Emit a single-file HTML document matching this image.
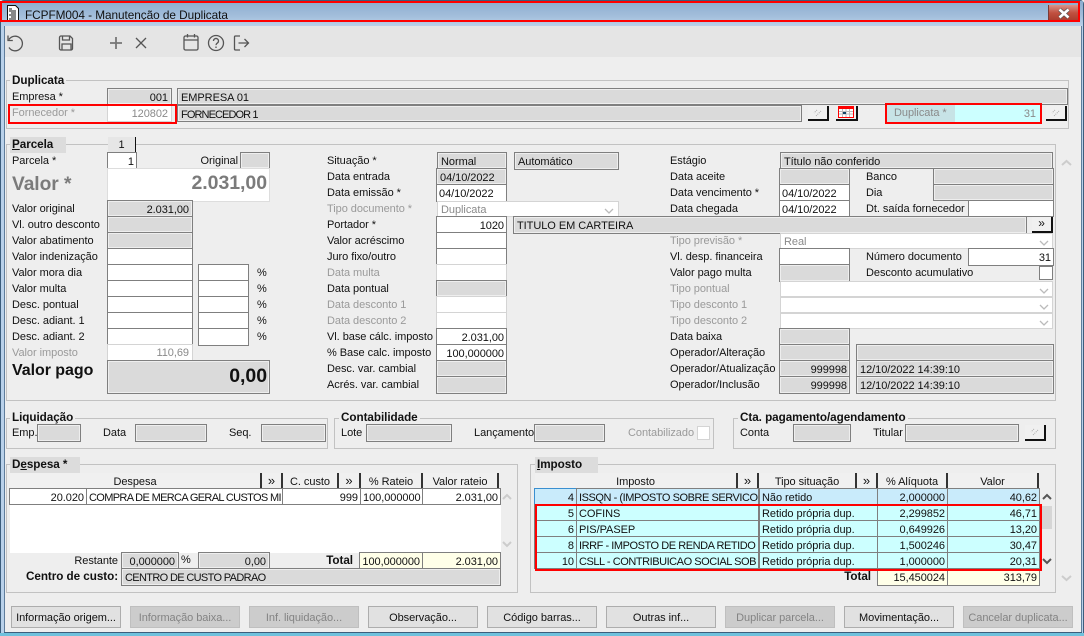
<!DOCTYPE html>
<html><head><meta charset="utf-8"><style>
html,body{margin:0;padding:0;width:1084px;height:636px;overflow:hidden;background:#eee}
body{font:11px/17px "Liberation Sans",sans-serif;letter-spacing:-.05px;color:#111;position:relative}
div,span.a{position:absolute;box-sizing:border-box;white-space:nowrap}
.l{height:16px;line-height:18px}
.d{color:#9a9a9a}
.b{font-weight:bold;font-size:11.7px;line-height:17px}
.r{text-align:right}
.f{border:1px solid #7f7f7f;background:#dadada;box-shadow:inset 0 0 0 1px #eee;padding:1px 3px 0;line-height:17px;overflow:hidden}
.w{border:1px solid #7f7f7f;background:#fff;padding:1px 2px 0;line-height:17px;overflow:hidden}
.p{border:1px solid #d4d4d4;background:#fff;padding:0 3px;line-height:16px;color:#8a8a8a;overflow:hidden}
.g{border:1px solid #c2c2c2}
.gt{background:#eee;font-weight:bold;font-size:11.7px;height:14px;line-height:15px;padding:0 2px}
.tab{background:#dcdcdc;font-weight:bold;font-size:11.7px;height:16px;line-height:16px;padding-left:2px}
.btn{width:110px;height:22px;top:606px;background:#e1e1e1;border:1px solid #adadad;text-align:center;line-height:22px}
.dis{background:#ccc;border-color:#bfbfbf;color:#838383}
.sb{background:#f0f0f0;border-right:2px solid #111;border-bottom:2px solid #111;text-align:center;line-height:13px;color:#999;font-size:12px}
.sb svg{display:block;margin:2px auto 0}
.hd{top:473px;height:16px;background:#f0f0f0;border-right:2px solid #333;text-align:center;line-height:18px;overflow:hidden}
.c{height:17px;border:1px solid #7f7f7f;padding:1px 2px 0;line-height:17px;overflow:hidden}
.cy{background:#ccffff}.cb{background:#c9ebfb}.cr{background:#ffffe8}
.red{border:2px solid #f00;background:none;z-index:5}
.t1{letter-spacing:-.45px}.t2{letter-spacing:-.65px}.t3{letter-spacing:-.9px}
</style></head><body>
<!-- window frame -->
<div style="left:0;top:0;width:1084px;height:636px;background:#b9d1ea;border:1px solid #3c5d7c;border-radius:4px 4px 0 0"></div>
<div style="left:1px;top:1px;width:1082px;height:25px;background:linear-gradient(#8baccf,#a3bedb 60%,#b9d1ea)"></div>
<div style="left:5px;top:57px;width:1076px;height:576px;background:#eee"></div>
<div style="left:5px;top:26px;width:1076px;height:31px;background:#e5e5e5"></div>
<div style="left:4px;top:26px;width:1px;height:607px;background:#5f7d9c"></div>
<div style="left:1081px;top:26px;width:1px;height:607px;background:#5f7d9c"></div>
<div style="left:4px;top:632px;width:1078px;height:1px;background:#3c5d7c"></div>
<div style="left:0;top:633px;width:1084px;height:3px;background:#6fc1dc"></div>
<!-- title -->
<svg style="position:absolute;left:7px;top:5px" width="12" height="16" viewBox="0 0 12 16"><path d="M.5.5h8l3 3v12H.5z" fill="#fff" stroke="#111"/><path d="M2 4h3M2 6h7M4 8h5M2 10h7M4 12h5M2 14h7" stroke="#111"/></svg>
<div style="left:25px;top:7px;font-size:11.8px;height:16px;line-height:16px;color:#111">FCPFM004 - Manutenção de Duplicata</div>
<div style="left:1048px;top:5px;width:31px;height:17px;background:linear-gradient(#d9928a,#c0503f 50%,#a83a2c);border:1px solid #7a3a36;border-top:none"></div>
<svg style="position:absolute;left:1057px;top:8px" width="14" height="11" viewBox="0 0 14 11"><path d="M2.500 1.500l9 8M11.500 1.500l-9 8" stroke="#555" stroke-width="4"/><path d="M2.500 1.500l9 8M11.500 1.500l-9 8" stroke="#fff" stroke-width="2.600"/></svg>
<div class="red" style="left:0;top:1px;width:1080px;height:21px"></div>
<!-- toolbar -->
<svg style="position:absolute;left:0;top:26px" width="260" height="31" viewBox="0 0 260 31" fill="none" stroke="#555" stroke-width="1.300">
<path d="M9 13.500A7.300 7.300 0 1 1 9 21.500M8 9.500v5h4.800"/>
<path d="M59.500 11.500a1.500 1.500 0 0 1 1.500-1.500h9l2.500 2.500v10a1.500 1.500 0 0 1-1.500 1.500H61a1.500 1.500 0 0 1-1.500-1.500zM62.500 10v4h7v-4M62 24v-6h9v6"/>
<path d="M116 11v12M110 17h12" stroke="#777" stroke-width="1.800"/>
<path d="M136 12l10 10M146 12l-10 10"/>
<path d="M185.500 10h11a1.500 1.500 0 0 1 1.500 1.500v11a1.500 1.500 0 0 1-1.500 1.500h-11a1.500 1.500 0 0 1-1.500-1.500v-11a1.500 1.500 0 0 1 1.500-1.500zM184 14h14M187.500 8v3.500M194.500 8v3.500"/>
<circle cx="216" cy="17" r="7.500"/><path d="M213.500 15a2.500 2.500 0 1 1 3.800 2.100c-.9.600-1.300 1-1.300 2M216 20.500v1.500"/>
<path d="M240 10h-4.500a1 1 0 0 0-1 1v12a1 1 0 0 0 1 1h4.500M238.500 17h9.500M244.500 13l4 4-4 4"/>
</svg>
<!-- Duplicata group -->
<div class="g" style="left:6px;top:80px;width:1063px;height:49px"></div>
<div class="gt" style="left:10px;top:73px">Duplicata</div>
<div class="l" style="left:12px;top:88px">Empresa *</div>
<div class="f r" style="left:107px;top:88px;width:65px;height:17px">001</div>
<div class="f" style="left:177px;top:88px;width:891px;height:17px">EMPRESA 01</div>
<div class="l d" style="left:12px;top:104px">Fornecedor *</div>
<div class="p r" style="left:107px;top:105px;width:65px;height:17px">120802</div>
<div class="f" style="left:177px;top:105px;width:625px;height:17px"><span class="t3">FORNECEDOR 1</span></div>
<div class="sb" style="left:808px;top:106px;width:21px;height:15px"><svg width="11" height="9" fill="none" stroke="#aaa" stroke-dasharray="1 1"><path d="M5 2L2 5M9 3L4 8"/></svg></div>
<div class="sb" style="left:836px;top:106px;width:22px;height:15px"></div>
<svg style="position:absolute;left:838px;top:106px" width="16" height="12" viewBox="0 0 16 12"><rect width="16" height="12" fill="#f00"/><rect x="1" y="3" width="14" height="8" fill="#fff"/><path d="M4.500 3v8M8 3v8M11.500 3v8M1 5.500h14M1 8h14" stroke="#bbb"/><rect x="5" y="6" width="3" height="2" fill="#146"/></svg>
<div class="red" style="left:8px;top:104px;width:169px;height:20px"></div>
<div style="left:887px;top:105px;width:68px;height:17px;background:#c7e3e6;color:#8a8a8a;padding-left:7px;line-height:16px">Duplicata *</div>
<div class="r" style="left:955px;top:105px;width:85px;height:17px;background:#ccffff;color:#8a8a8a;padding-right:4px;line-height:18px">31</div>
<div class="red" style="left:885px;top:103px;width:157px;height:21px"></div>
<div class="sb" style="left:1046px;top:106px;width:21px;height:15px"><svg width="11" height="9" fill="none" stroke="#aaa" stroke-dasharray="1 1"><path d="M5 2L2 5M9 3L4 8"/></svg></div>
<!-- Parcela group -->
<div class="g" style="left:6px;top:144px;width:1050px;height:257px"></div>
<div class="tab" style="left:10px;top:137px;width:56px"><u>P</u>arcela</div>
<div style="left:108px;top:137px;width:28px;height:15px;background:#e6e6e6;border-right:1px solid #111;text-align:center;line-height:16px">1</div>
<!-- col 1 -->
<div class="l" style="left:12px;top:152px">Parcela *</div>
<div class="w r" style="left:107px;top:152px;width:30px;height:17px">1</div>
<div class="l r" style="left:160px;top:152px;width:78px">Original</div>
<div class="f" style="left:240px;top:152px;width:30px;height:17px"></div>
<div style="left:12px;top:173px;font-size:19.200px;font-weight:bold;line-height:24px;color:#7b7b7b">Valor *</div>
<div class="r" style="left:107px;top:168px;width:163px;height:34px;background:#fff;border:1px solid #ddd;font-size:19.500px;font-weight:bold;line-height:29px;color:#7b7b7b;padding-right:2px">2.031,00</div>
<div class="l" style="left:12px;top:200px">Valor original</div>
<div class="f r" style="left:107px;top:200px;width:86px;height:17px">2.031,00</div>
<div class="l" style="left:12px;top:216px">Vl. outro desconto</div>
<div class="f" style="left:107px;top:216px;width:86px;height:17px"></div>
<div class="l" style="left:12px;top:232px">Valor abatimento</div>
<div class="f" style="left:107px;top:232px;width:86px;height:17px"></div>
<div class="l" style="left:12px;top:248px">Valor indenização</div>
<div class="w" style="left:107px;top:248px;width:86px;height:17px"></div>
<div class="l" style="left:12px;top:264px">Valor mora dia</div>
<div class="w" style="left:107px;top:264px;width:86px;height:17px"></div>
<div class="w" style="left:198px;top:264px;width:51px;height:17px"></div>
<div class="l" style="left:257px;top:264px">%</div>
<div class="l" style="left:12px;top:280px">Valor multa</div>
<div class="w" style="left:107px;top:280px;width:86px;height:17px"></div>
<div class="w" style="left:198px;top:280px;width:51px;height:17px"></div>
<div class="l" style="left:257px;top:280px">%</div>
<div class="l" style="left:12px;top:296px">Desc. pontual</div>
<div class="w" style="left:107px;top:296px;width:86px;height:17px"></div>
<div class="w" style="left:198px;top:296px;width:51px;height:17px"></div>
<div class="l" style="left:257px;top:296px">%</div>
<div class="l" style="left:12px;top:312px">Desc. adiant. 1</div>
<div class="w" style="left:107px;top:312px;width:86px;height:17px"></div>
<div class="w" style="left:198px;top:312px;width:51px;height:17px"></div>
<div class="l" style="left:257px;top:312px">%</div>
<div class="l" style="left:12px;top:328px">Desc. adiant. 2</div>
<div class="w" style="left:107px;top:328px;width:86px;height:17px"></div>
<div class="w" style="left:198px;top:328px;width:51px;height:18px"></div>
<div class="l" style="left:257px;top:328px">%</div>
<div class="l d" style="left:12px;top:344px">Valor imposto</div>
<div class="p r" style="left:107px;top:344px;width:86px;height:17px;line-height:17px">110,69</div>
<div style="left:12px;top:361px;font-size:16px;font-weight:bold;line-height:20px">Valor pago</div>
<div class="f r" style="left:107px;top:360px;width:163px;height:34px;font-size:19.500px;font-weight:bold;line-height:29px;padding-right:2px">0,00</div>
<!-- col 2 -->
<div class="l" style="left:327px;top:152px">Situação *</div>
<div class="f" style="left:437px;top:152px;width:70px;height:17px">Normal</div>
<div class="f" style="left:514px;top:152px;width:105px;height:18px">Automático</div>
<div class="l" style="left:327px;top:168px">Data entrada</div>
<div class="f" style="left:436px;top:168px;width:71px;height:17px">04/10/2022</div>
<div class="l" style="left:327px;top:184px">Data emissão *</div>
<div class="w" style="left:436px;top:184px;width:71px;height:18px">04/10/2022</div>
<div class="l d" style="left:327px;top:200px">Tipo documento *</div>
<div class="p" style="left:437px;top:201px;width:182px;height:16px">Duplicata</div>
<div class="l" style="left:327px;top:216px">Portador *</div>
<div class="w r" style="left:436px;top:216px;width:71px;height:17px">1020</div>
<div class="f" style="left:513px;top:216px;width:514px;height:18px">TITULO EM CARTEIRA</div>
<div class="sb" style="left:1032px;top:217px;width:21px;height:16px;color:#111">»</div>
<div class="l" style="left:327px;top:232px">Valor acréscimo</div>
<div class="w" style="left:436px;top:232px;width:71px;height:17px"></div>
<div class="l" style="left:327px;top:248px">Juro fixo/outro</div>
<div class="w" style="left:436px;top:248px;width:71px;height:17px"></div>
<div class="l d" style="left:327px;top:264px">Data multa</div>
<div class="p" style="left:436px;top:264px;width:71px;height:17px"></div>
<div class="l" style="left:327px;top:280px">Data pontual</div>
<div class="f" style="left:436px;top:280px;width:71px;height:17px"></div>
<div class="l d" style="left:327px;top:296px">Data desconto 1</div>
<div class="p" style="left:436px;top:296px;width:71px;height:17px"></div>
<div class="l d" style="left:327px;top:312px">Data desconto 2</div>
<div class="p" style="left:436px;top:312px;width:71px;height:17px"></div>
<div class="l" style="left:327px;top:328px">Vl. base cálc. imposto</div>
<div class="w r" style="left:436px;top:328px;width:71px;height:17px">2.031,00</div>
<div class="l" style="left:327px;top:344px">% Base calc. imposto</div>
<div class="w r" style="left:436px;top:344px;width:71px;height:17px">100,000000</div>
<div class="l" style="left:327px;top:360px">Desc. var. cambial</div>
<div class="f" style="left:436px;top:360px;width:71px;height:17px"></div>
<div class="l" style="left:327px;top:376px">Acrés. var. cambial</div>
<div class="f" style="left:436px;top:376px;width:71px;height:18px"></div>
<!-- col 3 -->
<div class="l" style="left:670px;top:152px">Estágio</div>
<div class="f" style="left:780px;top:152px;width:273px;height:17px">Título não conferido</div>
<div class="l" style="left:670px;top:168px">Data aceite</div>
<div class="f" style="left:779px;top:168px;width:71px;height:17px"></div>
<div class="l" style="left:866px;top:168px">Banco</div>
<div class="f" style="left:933px;top:168px;width:121px;height:17px"></div>
<div class="l" style="left:670px;top:184px">Data vencimento *</div>
<div class="w" style="left:779px;top:184px;width:71px;height:17px">04/10/2022</div>
<div class="l" style="left:866px;top:184px">Dia</div>
<div class="f" style="left:933px;top:184px;width:121px;height:17px"></div>
<div class="l" style="left:670px;top:200px">Data chegada</div>
<div class="w" style="left:779px;top:200px;width:71px;height:17px">04/10/2022</div>
<div class="l" style="left:866px;top:200px">Dt. saída fornecedor</div>
<div class="w" style="left:968px;top:200px;width:86px;height:17px"></div>
<div class="l d" style="left:670px;top:232px">Tipo previsão *</div>
<div class="p" style="left:780px;top:233px;width:273px;height:16px">Real</div>
<div class="l" style="left:670px;top:248px">Vl. desp. financeira</div>
<div class="w" style="left:779px;top:248px;width:71px;height:17px"></div>
<div class="l" style="left:866px;top:248px">Número documento</div>
<div class="w r" style="left:968px;top:248px;width:86px;height:18px">31</div>
<div class="l" style="left:670px;top:264px">Valor pago multa</div>
<div class="f" style="left:779px;top:264px;width:71px;height:18px"></div>
<div class="l" style="left:866px;top:264px">Desconto acumulativo</div>
<div class="w" style="left:1039px;top:266px;width:14px;height:14px"></div>
<div class="l d" style="left:670px;top:280px">Tipo pontual</div>
<div class="p" style="left:780px;top:281px;width:273px;height:16px"></div>
<div class="l d" style="left:670px;top:296px">Tipo desconto 1</div>
<div class="p" style="left:780px;top:297px;width:273px;height:16px"></div>
<div class="l d" style="left:670px;top:312px">Tipo desconto 2</div>
<div class="p" style="left:780px;top:313px;width:273px;height:16px"></div>
<div class="l" style="left:670px;top:328px">Data baixa</div>
<div class="f" style="left:779px;top:328px;width:71px;height:17px"></div>
<div class="l" style="left:670px;top:344px">Operador/Alteração</div>
<div class="f" style="left:779px;top:344px;width:71px;height:17px"></div>
<div class="f" style="left:856px;top:344px;width:198px;height:17px"></div>
<div class="l" style="left:670px;top:360px">Operador/Atualização</div>
<div class="f r" style="left:779px;top:360px;width:71px;height:17px;padding-right:2px">999998</div>
<div class="f" style="left:856px;top:360px;width:198px;height:17px">12/10/2022 14:39:10</div>
<div class="l" style="left:670px;top:376px">Operador/Inclusão</div>
<div class="f r" style="left:779px;top:376px;width:71px;height:18px;padding-right:2px">999998</div>
<div class="f" style="left:856px;top:376px;width:198px;height:18px">12/10/2022 14:39:10</div>
<!-- chevrons -->
<svg style="position:absolute;left:0;top:0;pointer-events:none" width="1084" height="636" fill="none" stroke="#bbb" stroke-width="1.300">
<path d="M605 209l4 4 4-4M1040 241l4 4 4-4M1040 289l4 4 4-4M1040 305l4 4 4-4M1040 321l4 4 4-4"/>
<path d="M1062 165l4.500-4 4.500 4M1062 576l4.500 4 4.500-4M503 499l4-4 4 4M503 542l4 4 4-4" stroke="#ccc" stroke-width="2"/>
</svg>
<!-- bottom groups -->
<div class="g" style="left:6px;top:418px;width:322px;height:31px"></div>
<div class="gt" style="left:10px;top:410px">Liquidação</div>
<div class="l" style="left:12px;top:424px">Emp.</div>
<div class="f" style="left:37px;top:424px;width:44px;height:18px"></div>
<div class="l" style="left:103px;top:424px">Data</div>
<div class="f" style="left:135px;top:424px;width:72px;height:18px"></div>
<div class="l" style="left:229px;top:424px">Seq.</div>
<div class="f" style="left:261px;top:424px;width:65px;height:18px"></div>
<div class="g" style="left:334px;top:418px;width:380px;height:31px"></div>
<div class="gt" style="left:339px;top:410px">Contabilidade</div>
<div class="l" style="left:341px;top:424px">Lote</div>
<div class="f" style="left:366px;top:424px;width:86px;height:18px"></div>
<div class="l" style="left:474px;top:424px">Lançamento</div>
<div class="f" style="left:534px;top:424px;width:71px;height:18px"></div>
<div class="l d" style="left:628px;top:424px">Contabilizado</div>
<div class="p" style="left:697px;top:426px;width:13px;height:14px"></div>
<div class="g" style="left:733px;top:418px;width:323px;height:31px"></div>
<div class="gt" style="left:738px;top:410px">Cta. pagamento/agendamento</div>
<div class="l" style="left:740px;top:424px">Conta</div>
<div class="f" style="left:793px;top:424px;width:58px;height:18px"></div>
<div class="l" style="left:873px;top:424px">Titular</div>
<div class="f" style="left:905px;top:424px;width:114px;height:18px"></div>
<div class="sb" style="left:1025px;top:425px;width:21px;height:16px"><svg width="11" height="9" fill="none" stroke="#aaa" stroke-dasharray="1 1"><path d="M5 2L2 5M9 3L4 8"/></svg></div>
<!-- Despesa -->
<div class="g" style="left:6px;top:464px;width:512px;height:129px"></div>
<div class="tab" style="left:10px;top:457px;width:70px">D<u>e</u>spesa *</div>
<div style="left:10px;top:489px;width:491px;height:64px;background:#fff"></div>
<div class="hd" style="left:10px;width:252px">Despesa</div>
<div class="hd" style="left:262px;width:21px;font-size:13px;line-height:15px">»</div>
<div class="hd" style="left:283px;width:56px">C. custo</div>
<div class="hd" style="left:339px;width:22px;font-size:13px;line-height:15px">»</div>
<div class="hd" style="left:361px;width:62px">% Rateio</div>
<div class="hd" style="left:423px;width:76px">Valor rateio</div>
<div class="c r" style="left:9px;top:488px;width:78px">20.020</div>
<div class="c t2" style="left:86px;top:488px;width:197px">COMPRA DE MERCA GERAL CUSTOS MI</div>
<div class="c r" style="left:282px;top:488px;width:79px">999</div>
<div class="c r" style="left:360px;top:488px;width:63px">100,000000</div>
<div class="c r" style="left:422px;top:488px;width:79px">2.031,00</div>
<div class="l r" style="left:60px;top:552px;width:58px">Restante</div>
<div class="f r" style="left:121px;top:552px;width:58px;height:17px">0,000000</div>
<div class="l" style="left:181px;top:551px">%</div>
<div class="f r" style="left:198px;top:552px;width:72px;height:17px">0,00</div>
<div class="l b r" style="left:300px;top:552px;width:53px">Total</div>
<div class="c cr r" style="left:359px;top:552px;width:64px">100,000000</div>
<div class="c cr r" style="left:422px;top:552px;width:79px">2.031,00</div>
<div class="l b" style="left:26px;top:568px">Centro de custo:</div>
<div class="f t2" style="left:121px;top:568px;width:380px;height:18px">CENTRO DE CUSTO PADRAO</div>
<!-- Imposto -->
<div class="g" style="left:530px;top:464px;width:526px;height:129px"></div>
<div class="tab" style="left:535px;top:457px;width:63px"><u>I</u>mposto</div>
<div class="hd" style="left:535px;width:203px">Imposto</div>
<div class="hd" style="left:738px;width:21px;font-size:13px;line-height:15px">»</div>
<div class="hd" style="left:759px;width:98px">Tipo situação</div>
<div class="hd" style="left:857px;width:21px;font-size:13px;line-height:15px">»</div>
<div class="hd" style="left:878px;width:70px">% Alíquota</div>
<div class="hd" style="left:948px;width:91px">Valor</div>
<div class="c cb r" style="left:534px;top:488px;width:43px;border-color:#3a8fd0 #555 #7f7f7f #3a8fd0">4</div>
<div class="c cb t1" style="left:576px;top:488px;width:183px">ISSQN - (IMPOSTO SOBRE SERVICO</div>
<div class="c cb" style="left:759px;top:488px;width:119px">Não retido</div>
<div class="c cb r" style="left:877px;top:488px;width:71px">2,000000</div>
<div class="c cb r" style="left:947px;top:488px;width:93px">40,62</div>
<div class="c cy r" style="left:534px;top:504px;width:43px">5</div>
<div class="c cy" style="left:576px;top:504px;width:183px">COFINS</div>
<div class="c cy" style="left:759px;top:504px;width:119px">Retido própria dup.</div>
<div class="c cy r" style="left:877px;top:504px;width:71px">2,299852</div>
<div class="c cy r" style="left:947px;top:504px;width:93px">46,71</div>
<div class="c cy r" style="left:534px;top:520px;width:43px">6</div>
<div class="c cy" style="left:576px;top:520px;width:183px">PIS/PASEP</div>
<div class="c cy" style="left:759px;top:520px;width:119px">Retido própria dup.</div>
<div class="c cy r" style="left:877px;top:520px;width:71px">0,649926</div>
<div class="c cy r" style="left:947px;top:520px;width:93px">13,20</div>
<div class="c cy r" style="left:534px;top:536px;width:43px">8</div>
<div class="c cy t1" style="left:576px;top:536px;width:183px">IRRF - IMPOSTO DE RENDA RETIDO N</div>
<div class="c cy" style="left:759px;top:536px;width:119px">Retido própria dup.</div>
<div class="c cy r" style="left:877px;top:536px;width:71px">1,500246</div>
<div class="c cy r" style="left:947px;top:536px;width:93px">30,47</div>
<div class="c cy r" style="left:534px;top:552px;width:43px">10</div>
<div class="c cy t1" style="left:576px;top:552px;width:183px">CSLL - CONTRIBUICAO SOCIAL SOB</div>
<div class="c cy" style="left:759px;top:552px;width:119px">Retido própria dup.</div>
<div class="c cy r" style="left:877px;top:552px;width:71px">1,000000</div>
<div class="c cy r" style="left:947px;top:552px;width:93px">20,31</div>
<div class="red" style="left:535px;top:504px;width:507px;height:67px"></div>
<div class="l b r" style="left:820px;top:568px;width:51px">Total</div>
<div class="c cr r" style="left:877px;top:568px;width:71px;height:18px">15,450024</div>
<div class="c cr r" style="left:947px;top:568px;width:93px;height:18px">313,79</div>
<div style="left:1042px;top:506px;width:10px;height:23px;background:#d6d6d6"></div>
<svg style="position:absolute;left:1042px;top:490px" width="12" height="80" fill="none" stroke="#555" stroke-width="2"><path d="M1 9l4-4 4 4M1 69l4 4 4-4"/></svg>
<!-- buttons -->
<div class="btn" style="left:11px">Informação origem...</div>
<div class="btn dis" style="left:130px">Informação baixa...</div>
<div class="btn dis" style="left:249px">Inf. liquidação...</div>
<div class="btn" style="left:368px">Observação...</div>
<div class="btn" style="left:487px">Código barras...</div>
<div class="btn" style="left:606px">Outras inf...</div>
<div class="btn dis" style="left:725px">Duplicar parcela...</div>
<div class="btn" style="left:844px">Movimentação...</div>
<div class="btn dis" style="left:963px">Cancelar duplicata...</div>
</body></html>
